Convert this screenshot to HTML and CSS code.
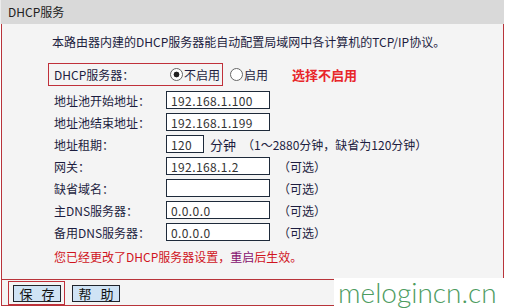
FILE: index.html
```html
<!DOCTYPE html>
<html lang="zh-CN">
<head>
  <meta charset="UTF-8">
  <title>DHCP服务</title>
  <link rel="stylesheet" href="styles.css">
</head>
<body>
  <div class="panel">
    <div class="panel-head">DHCP服务</div>
    <div class="panel-body">
      <p class="intro">本路由器内建的DHCP服务器能自动配置局域网中各计算机的TCP/IP协议。</p>

      <div class="switch-row">
        <div class="switch-box">
          <span class="label">DHCP服务器：</span>
          <label class="radio"><input type="radio" name="dhcp" checked>不启用</label>
        </div>
        <label class="radio radio-on"><input type="radio" name="dhcp">启用</label>
        <span class="hint">选择不启用</span>
      </div>

      <div class="row"><span class="label">地址池开始地址：</span><input class="field" type="text" value="192.168.1.100"></div>
      <div class="row"><span class="label">地址池结束地址：</span><input class="field" type="text" value="192.168.1.199"></div>
      <div class="row"><span class="label">地址租期：</span><input class="field short" type="text" value="120"><span class="unit">分钟</span><span class="note">（1～2880分钟，缺省为120分钟）</span></div>
      <div class="row"><span class="label">网关：</span><input class="field" type="text" value="192.168.1.2"><span class="note">（可选）</span></div>
      <div class="row"><span class="label">缺省域名：</span><input class="field" type="text" value=""><span class="note">（可选）</span></div>
      <div class="row"><span class="label">主DNS服务器：</span><input class="field" type="text" value="0.0.0.0"><span class="note">（可选）</span></div>
      <div class="row"><span class="label">备用DNS服务器：</span><input class="field" type="text" value="0.0.0.0"><span class="note">（可选）</span></div>

      <p class="notice">您已经更改了DHCP服务器设置，<span class="restart">重启</span>后生效。</p>
    </div>
    <div class="panel-foot">
      <span class="btn-mark"><button class="btn"><span>保</span><span>存</span></button></span>
      <button class="btn"><span>帮</span><span>助</span></button>
    </div>
  </div>
  <div class="watermark">melogincn.cn</div>
</body>
</html>
```

FILE: styles.css
```css
body {
  margin: 0;
  font-family: "Noto Sans CJK SC", sans-serif;
  font-size: 12px;
  color: #1d1d3f;
  background: #fff;
  width: 505px;
  height: 308px;
  overflow: hidden;
  position: relative;
}
.panel {
  margin: 0 1px 0 0;
}
.panel-head {
  height: 24px;
  line-height: 24px;
  padding-left: 7px;
  background: #d9d9d9;
  font-size: 12px;
  color: #222;
  border-left: 1px solid #ececec;
}
.panel-body {
  margin-left: 1px;
  background: #f4f4f4;
  border-left: 1px solid #b8343a;
  border-right: 1px solid #b8343a;
  padding: 8px 0 12px 46px;
}
.intro {
  margin: 0 0 11px 4px;
  height: 20px;
  line-height: 20px;
}
.switch-row {
  display: flex;
  align-items: center;
  height: 23px;
  margin-bottom: 3px;
}
.switch-box {
  display: flex;
  align-items: center;
  height: 21px;
  padding: 0 2px 0 5px;
  border: 1px solid #c0303a;
}
.label {
  width: 112px;
  flex: none;
}
.radio {
  display: flex;
  align-items: center;
}
.radio input {
  appearance: none;
  width: 13px;
  height: 13px;
  margin: 0 1px 0 4px;
  border: 1px solid #666;
  border-radius: 50%;
  background: #fff;
  box-sizing: border-box;
}
.radio input:checked {
  background: radial-gradient(circle, #222 0 2.6px, #fff 3.2px);
}
.radio-on input {
  margin-left: 7px;
}
.hint {
  margin-left: 24px;
  color: #e8262a;
  font-weight: bold;
  font-size: 13px;
}
.row {
  display: flex;
  align-items: center;
  height: 22px;
  padding-left: 6px;
}
.field {
  width: 104px;
  height: 18px;
  box-sizing: border-box;
  margin: 0;
  padding: 0 4px;
  border: 1px solid #1e2a3a;
  background: #fff;
  font-family: "Noto Sans CJK SC", sans-serif;
  font-size: 12px;
  color: #333;
  letter-spacing: 0.4px;
}
.field.short {
  width: 38px;
}
.unit {
  margin-left: 6px;
  margin-right: 6px;
  font-size: 13px;
}
.note {
  margin-left: 8px;
}
.unit + .note {
  margin-left: 0;
}
.notice {
  margin: 4px 0 0 6px;
  height: 20px;
  line-height: 20px;
  color: #d0141e;
}
.restart {
  color: #86106e;
}
.panel-foot {
  margin-left: 1px;
  height: 24px;
  border: 1px solid #b8343a;
  background: #f4f4f4;
  display: flex;
  align-items: flex-start;
  padding-top: 1px;
}
.btn-mark {
  display: flex;
  margin-left: 6px;
  padding: 3px 3px 2px 4px;
  border: 1px solid #c0303a;
  height: 17px;
}
.btn {
  display: flex;
  justify-content: center;
  align-items: center;
  gap: 9px;
  width: 48px;
  height: 17px;
  padding: 0;
  border: 1px solid #20242c;
  background: #cfe3f5;
  font-family: "Noto Sans CJK SC", sans-serif;
  font-size: 13px;
  line-height: 15px;
  color: #111;
}
.panel-foot > .btn {
  margin: 4px 0 0 7px;
}
.watermark {
  position: absolute;
  left: 334px;
  top: 278px;
  width: 171px;
  height: 30px;
  background: #fff;
  color: #4d9c5f;
  font-family: Lato, sans-serif;
  font-weight: 300;
  font-size: 28px;
  line-height: 28px;
  padding-left: 4px;
  box-sizing: border-box;
}
```
